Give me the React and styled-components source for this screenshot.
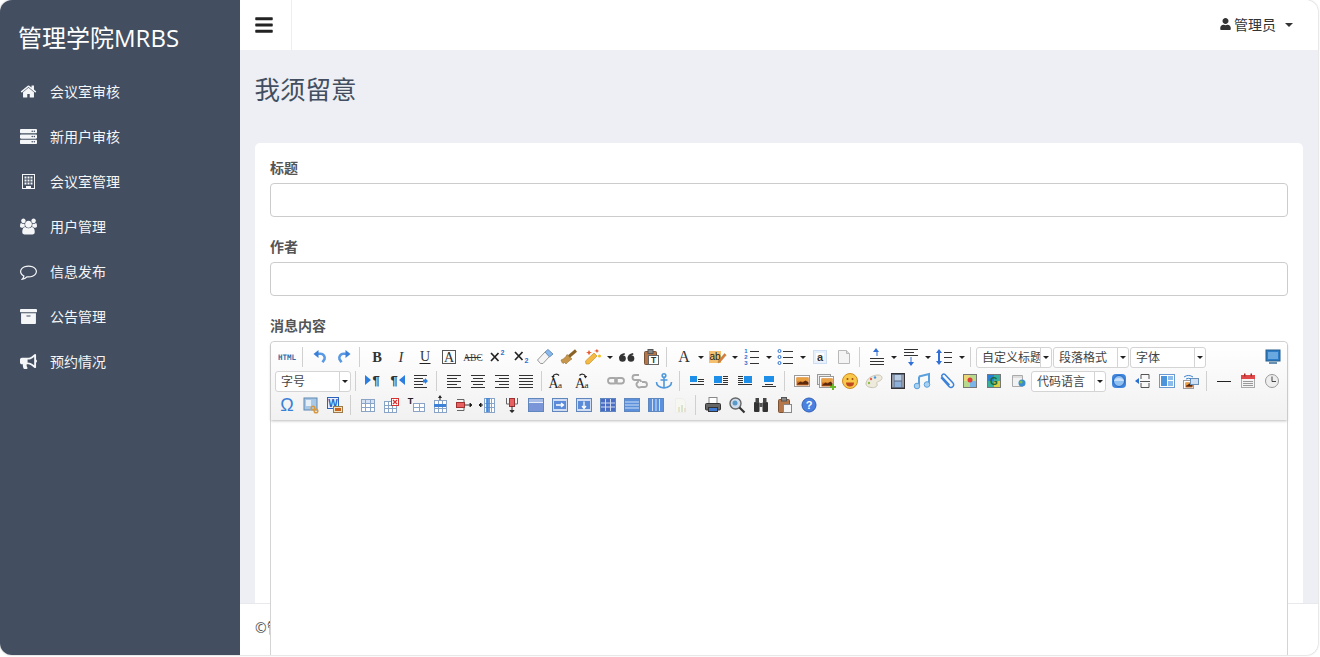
import React from 'react';
import styled, { createGlobalStyle } from 'styled-components';
import { FaServer, FaArchive, FaBullhorn, FaBars, FaUser } from 'react-icons/fa';

const Global = createGlobalStyle`
  html, body { margin: 0; padding: 0; background: #fff; height: 100%; overflow: hidden; }
  * { box-sizing: border-box; }
  body { font-family: "Open Sans", "Noto Sans CJK SC", sans-serif; font-size: 14px; color: #333; }
`;
const Win = styled.div`
  width: 1318px; height: 655px; display: flex; overflow: hidden; position: relative;
  border-radius: 12px; background: #edeff4; box-shadow: 0 0 2px rgba(0,0,0,.35);
`;
const Side = styled.aside`width: 240px; flex: none; background: #434f61; color: #fff;`;
const Brand = styled.div`font-size: 24px; line-height: 34px; padding: 21px 0 13px 18px;`;
const Menu = styled.nav`display: flex; flex-direction: column;`;
const MenuItem = styled.a`
  height: 45px; display: flex; align-items: center; padding-left: 20px; font-size: 14px; color: #f5f6f8;
  svg { width: 17px; height: 17px; margin: 2px 13px 0 0; flex: none; fill: currentColor; }
`;
const Main = styled.main`flex: 1; min-width: 0; display: flex; flex-direction: column; position: relative;`;
const Header = styled.header`height: 50px; flex: none; background: #fff; display: flex; align-items: stretch; justify-content: space-between;`;
const Toggle = styled.button`
  width: 52px; border: 0; border-right: 1px solid #eee; background: #fff; color: #222; padding: 0 0 0 15px; display: flex; align-items: center;
  svg { width: 18px; height: 20px; }
`;
const UserMenu = styled.div`
  display: flex; align-items: center; padding: 0 25px 2px 0; color: #333; font-size: 14px;
  svg { width: 11px; height: 12px; margin-right: 3px; }
`;
const Caret = styled.span`
  margin: 2px 0 0 9px; width: 0; height: 0; border-left: 4px solid transparent; border-right: 4px solid transparent; border-top: 4px solid #333;
`;
const Content = styled.section`padding: 24px 15px 0; flex: 1; min-height: 0;`;
const Title = styled.h1`font-weight: 400; font-size: 25.5px; line-height: 30px; margin: 0 0 39px -.5px; color: #434f61;`;
const Card = styled.div`background: #fff; border-radius: 5px 5px 0 0; padding: 15px 15px 0; height: 700px;`;
const Field = styled.div`margin-bottom: 20px;`;
const Label = styled.label`display: block; font-weight: 700; font-size: 14px; line-height: 20px; margin-bottom: 5px; color: #555;`;
const TextInput = styled.input`display: block; width: 100%; height: 34px; border: 1px solid #ccc; border-radius: 4px; background: #fff;`;
const Footer = styled.footer`
  position: absolute; left: 0; right: 0; bottom: 0; height: 52px; background: #fff; border-top: 1px solid #e7e9ec; z-index: 1;
  padding: 14px 15px; font-size: 14px; line-height: 20px; color: #555;
`;
const Editor = styled.div`position: relative; z-index: 2; background: #fff; border: 1px solid #d4d4d4; border-radius: 4px 4px 0 0; height: 400px;`;
const Toolbar = styled.div`
  height: 78px; padding: 3px 0 0 4px; background: linear-gradient(to bottom, #ffffff, #f1f1f1);
  box-shadow: 0 1px 3px #bbb; border-radius: 4px 4px 0 0; display: flex; flex-direction: column;
`;
const ToolRow = styled.div`display: flex; height: 24px; align-items: center;`;
const ToolBtn = styled.span`
  width: ${p => p.$w}px; height: 24px; flex: none; display: flex; align-items: center; justify-content: ${p => p.$split ? 'flex-start' : 'center'};
  padding-left: ${p => p.$split ? 2 : 0}px; margin-left: ${p => p.$right ? 'auto' : 0}; margin-right: ${p => p.$right ? '2px' : 0};
  svg { display: block; flex: none; }
`;
const ToolCaret = styled.i`
  margin-left: 4px; width: 0; height: 0; border-left: 3px solid transparent; border-right: 3px solid transparent; border-top: 3px solid #222;
`;
const ToolSep = styled.span`
  width: 9px; height: 20px; flex: none;
  &::after { content: ""; display: block; width: 1px; height: 20px; margin-left: 3px; background: #d0d0d0; }
`;
const Combo = styled.span`
  width: ${p => p.$w}px; height: 21px; flex: none; margin: 0 1px 0 ${p => p.$ml || 0}px; display: flex; background: #fff; border: 1px solid #d4d4d4; border-radius: 3px;
  font-size: 12px; line-height: 17px; color: #444; font-family: "Noto Sans CJK SC", sans-serif;
`;
const ComboText = styled.span`flex: 1; min-width: 0; padding-left: 5px; overflow: hidden; white-space: nowrap;`;
const ComboArrow = styled.span`
  width: 11px; flex: none; border-left: 1px solid #d4d4d4; display: flex; align-items: center; justify-content: center;
  &::after { content: ""; border-left: 3px solid transparent; border-right: 3px solid transparent; border-top: 3px solid #222; }
`;
const FootText = styled.span``;

const FaSvg = ({ vw = 1792, d }) => <svg viewBox={`0 0 ${vw} 1792`}><path d={d} /></svg>;
const HomeIc = () => <FaSvg d="M1472 992v480q0 26-19 45t-45 19h-384v-384h-256v384h-384q-26 0-45-19t-19-45v-480q0-1 .5-3t.5-3l575-474 575 474q1 2 1 6zm223-69l-62 74q-8 9-21 11h-3q-13 0-21-7l-692-577-692 577q-12 8-24 7-13-2-21-11l-62-74q-8-10-7-23.5t11-21.5l719-599q32-26 76-26t76 26l244 204v-195q0-14 9-23t23-9h192q14 0 23 9t9 23v408l219 182q10 8 11 21.5t-7 23.5z" />;
const UsersIc = () => <FaSvg vw={1920} d="M593 896q-162 5-265 128h-134q-82 0-138-40.500t-56-118.500q0-353 124-353 6 0 43.500 21t97.500 42.500 119 21.500q67 0 133-23-5 37-5 66 0 139 81 256zm1071 637q0 120-73 189.500t-194 69.500h-874q-121 0-194-69.500t-73-189.500q0-53 3.500-103.500t14-109 26.500-108.500 43-97.500 62-81 85.500-53.500 111.500-20q10 0 43 21.500t73 48 107 48 135 21.500 135-21.500 107-48 73-48 43-21.500q61 0 111.500 20t85.500 53.500 62 81 43 97.500 26.500 108.500 14 109 3.500 103.500zm-1024-1277q0 106-75 181t-181 75-181-75-75-181 75-181 181-75 181 75 75 181zm704 384q0 159-112.500 271.500t-271.500 112.500-271.500-112.500-112.500-271.500 112.500-271.500 271.500-112.500 271.500 112.500 112.500 271.500zm576 225q0 78-56 118.500t-138 40.500h-134q-103-123-265-128 81-117 81-256 0-29-5-66 66 23 133 23 59 0 119-21.500t97.500-42.500 43.500-21q124 0 124 353zm-128-609q0 106-75 181t-181 75-181-75-75-181 75-181 181-75 181 75 75 181z" />;
const CommentIc = () => <FaSvg d="M896 384q-204 0-381.500 69.500t-282 187.500-104.500 255q0 112 71.500 213.500t201.500 175.500l87 50-27 96q-24 91-70 172 152-63 275-171l43-38 57 6q69 8 130 8 204 0 381.500-69.500t282-187.500 104.500-255-104.500-255-282-187.500-381.500-69.500zm896 512q0 174-120 321.500t-326 233-450 85.500q-70 0-145-8-198 175-460 242-49 14-114 22h-5q-15 0-27-10.500t-16-27.500v-1q-3-4-.5-12t2-10 4.500-9.500l6-9 7-8.500 8-9q7-8 31-34.500t34.500-38 31-39.500 32.500-51 27-59 26-76q-157-89-247.500-220t-90.500-281q0-174 120-321.500t326-233 450-85.500 450 85.500 326 233 120 321.500z" />;
const BuildingIc = () => (
  <svg viewBox="0 0 17 17">
    <path d="M2 1h13v15H2zM3 2v13h3v-2h5v2h3V2z" fillRule="evenodd" />
    {[3.500, 6.500, 9.500].map(y => [4.500, 7.500, 10.500].map(x => <rect key={`${x}${y}`} x={x} y={y} width="2" height="2" />))}
  </svg>
);

const Svg = ({ w = 20, children }) => <svg width={w} height="20" viewBox={`0 0 ${w} 20`}>{children}</svg>;
const serif = '"Liberation Serif", serif';
const sans = '"Liberation Sans", sans-serif';
const T = ({ x = 10, y = 15, s = 14, f = serif, c = '#333', b, i, children, ...r }) => (
  <text x={x} y={y} textAnchor="middle" fontSize={s} fontFamily={f} fill={c} fontWeight={b ? 700 : 400} fontStyle={i ? 'italic' : 'normal'} {...r}>{children}</text>
);
const Ln = ({ rows, c = '#333' }) => rows.map((r, k) => <rect key={k} x={r[0]} y={r[1]} width={r[2]} height={1} fill={c} />);
const para = (xs, y0 = 4, n = 5, step = 3) => Array.from({ length: n }, (_, k) => { const v = xs[k % xs.length]; return [v[0], y0 + k * step, v[1]]; });
const Photo = ({ x, y, w, h }) => (
  <g>
    <rect x={x} y={y} width={w} height={h} fill="#fff" stroke="#9a9a9a" />
    <rect x={x + 2} y={y + 2} width={w - 3} height={h - 3} fill="#c9661c" />
    <rect x={x + 2} y={y + 2} width={w - 3} height={(h - 3) / 2} fill="#e8a040" />
    <path d={`M${x + 2} ${y + h - 2}l4-3 2 1 3-2 ${w - 12} 2v2z`} fill="#5a2a10" />
  </g>
);
const Tbl = ({ x = 3, y = 5, w = 14, h = 12, head, fill = '#fff', c = '#8aa4c8', cols = 3, rows = 3 }) => (
  <g>
    <rect x={x + .5} y={y + .5} width={w} height={h} fill={fill} stroke={c} />
    {head && <rect x={x + 1} y={y + 1} width={w - 1} height={3} fill={head} />}
    {Array.from({ length: cols - 1 }, (_, k) => <rect key={k} x={x + Math.round((k + 1) * w / cols)} y={y} width="1" height={h} fill={c} />)}
    {Array.from({ length: rows - 1 }, (_, k) => <rect key={k} x={x} y={y + Math.round((k + 1) * h / rows)} width={w} height="1" fill={c} />)}
  </g>
);
const Cell = ({ x, y, w, h, c = '#4a6cc4' }) => <rect x={x} y={y} width={w} height={h} fill={c} />;
const Frame = ({ children }) => (<g><rect x="2.500" y="3.500" width="15" height="13" fill="#cfdcf2" stroke="#5f86bd" />{children}</g>);
const imgAlign = (bx, by, bw, bh, lines) => (<g><rect x={bx} y={by} width={bw} height={bh} fill="#1e8fe8" /><Ln rows={lines} /></g>);
const Cross = ({ y }) => <path d={`M4 ${y}l7.500 8M11.500 ${y}L4 ${y + 8}`} stroke="#222" strokeWidth="1.700" fill="none" />;
const Quote = ({ x }) => <g fill="#333"><circle cx={x + 3.500} cy="11.500" r="3.300" /><path d={`M${x} 11.500C${x} 8.500 ${x + 2} 6.500 ${x + 5.500} 6l.5 1.500C${x + 4} 8 ${x + 3} 9 ${x + 3} 11z`} /></g>;

const icons = {
  html: <Svg><text x="10" y="13" textAnchor="middle" fontSize="7.500" fontWeight="700" fontFamily='"DejaVu Sans Mono", monospace' fill="#2f6ea8">HTML</text></Svg>,
  undo: <Svg><path d="M8 6.800h2.500a4.200 4.200 0 0 1 4 5.500l-2 3" fill="none" stroke="#5a9ae4" strokeWidth="2.600" /><path d="M3.500 7L8.500 3v8z" fill="#3a80d8" /></Svg>,
  redo: <Svg><path d="M12 6.800H9.500a4.200 4.200 0 0 0-4 5.500l2 3" fill="none" stroke="#5a9ae4" strokeWidth="2.600" /><path d="M16.500 7L11.500 3v8z" fill="#3a80d8" /></Svg>,
  bold: <Svg><T b s={14.500}>B</T></Svg>,
  italic: <Svg><T i s={14.500}>I</T></Svg>,
  underline: <Svg><T s={14} y={14}>U</T><rect x="4.500" y="16" width="11" height="1" fill="#222" /></Svg>,
  fontborder: <Svg><rect x="3.500" y="3.500" width="13" height="13" fill="none" stroke="#555" /><T s={14} y={15}>A</T></Svg>,
  strike: <Svg><T s={9.500} y={14} c="#444">ABC</T><rect x="2" y="10" width="16" height="1" fill="#333" /></Svg>,
  sup: <Svg><Cross y={6} /><T s={7} x={15.500} y={8} f={sans} c="#2b6fd0" b>2</T></Svg>,
  sub: <Svg><Cross y={5} /><T s={7} x={15.500} y={16} f={sans} c="#2b6fd0" b>2</T></Svg>,
  eraser: <Svg><path d="M2.500 13L10 5l4.500 4.500L8 16.500H5.500z" fill="#f4f4f4" stroke="#999" /><path d="M10 5l3-2.500 5 4.500-3.500 3z" fill="#88b8ec" stroke="#6a93c0" /></Svg>,
  brush: <Svg><path d="M2 13C5 12 7 10 8 7.500l5 4.500c-2 1-4 3-6 5L5.500 15.500 4 16.500 3 15.500z" fill="#c8964a" stroke="#8a6226" strokeWidth=".5" /><path d="M10 9.500l7-6" stroke="#8a6226" strokeWidth="3" /></Svg>,
  wand: <Svg><path d="M3 17l-.500-3L11 6l3 3-8 8z" fill="#f5b946" stroke="#c08a20" strokeWidth=".6" /><path d="M5 5l1-2 1 2 2 .500-2 .800-1 2-1-2-2-.800zM14 2l.800 1.500 1.500.500-1.500.600-.800 1.500-.800-1.500L11 4l1.700-.500z" fill="#e8562c" /><circle cx="16.500" cy="9" r="1.500" fill="#f4c020" /></Svg>,
  quote: <Svg><Quote x={2} /><Quote x={10.500} /></Svg>,
  paste: <Svg><rect x="3.500" y="4.500" width="12" height="13" rx="1" fill="#b5764a" stroke="#7a5236" /><rect x="7" y="2.500" width="5" height="4" fill="#888" stroke="#555" /><rect x="7.500" y="8.500" width="10" height="9" fill="#fff" stroke="#666" /><T x={12.500} y={16} s={8.500} f={sans} b c="#333">T</T></Svg>,
  color: <Svg><T s={16} y={15}>A</T></Svg>,
  highlight: <Svg><rect x="1" y="4" width="12" height="12" fill="#f4c070" /><T x={7} y={13} s={10} f={sans} c="#222">ab</T><path d="M10 16l.500-2.500 6-7 1.800 1.500-6 7z" fill="#e07838" stroke="#884" strokeWidth=".4" /></Svg>,
  ol: <Svg><T x={4} y={6} s={6} f={sans} c="#2b6fd0" b>1</T><T x={4} y={12} s={6} f={sans} c="#2b6fd0" b>2</T><T x={4} y={18} s={6} f={sans} c="#2b6fd0" b>3</T><Ln rows={[[8, 4, 9], [8, 10, 9], [8, 16, 9]]} /></Svg>,
  ul: <Svg>{[4, 10, 16].map(y => <circle key={y} cx="3.500" cy={y} r="1.500" fill="none" stroke="#2b6fd0" />)}<Ln rows={[[7, 4, 10], [7, 10, 10], [7, 16, 10]]} /></Svg>,
  selectall: <Svg><rect x="3.500" y="3.500" width="13" height="13" fill="#e8f0fc" stroke="#a8c4ec" strokeDasharray="1 1" /><rect x="6" y="6" width="8" height="8" fill="#fff" /><T s={11} y={14} f={sans} c="#333" b>a</T></Svg>,
  page: <Svg><path d="M4.500 3.500h8l3 3v10h-11z" fill="#f4f4f4" stroke="#b8b8b8" /><path d="M12.500 3.500v3h3" fill="#ddd" stroke="#b8b8b8" /></Svg>,
  rowtop: <Svg><path d="M9 1L12 5H10.500V9H9.500V5H6z" fill="#2f6fd6" /><Ln rows={[[3, 11, 14], [3, 14, 14], [3, 17, 14]]} /></Svg>,
  rowbot: <Svg><Ln rows={[[3, 2, 14], [3, 5, 10], [3, 8, 14]]} /><path d="M9.500 10h1v5H13l-3 4-3-4h2.500z" fill="#2f6fd6" /></Svg>,
  lineheight: <Svg><path d="M4 2l3 4H5v8h2l-3 4-3-4h2V6H1z" fill="#2f6fd6" /><Ln rows={[[9, 5, 8], [9, 10, 8], [9, 15, 8]]} /></Svg>,
  full: <Svg><rect x="3" y="3" width="14" height="11" fill="#2d7dc8" stroke="#245e8c" /><rect x="5" y="5" width="10" height="7" fill="#6aa8e0" /><rect x="6" y="15" width="8" height="2" fill="#6a8fb0" /></Svg>,
  ltr: <Svg><path d="M2 4l6 5-6 5z" fill="#2b7de0" /><T x={13} y={14} s={13} f={sans} c="#333" b>¶</T></Svg>,
  rtl: <Svg><T x={7} y={14} s={13} f={sans} c="#333" b>¶</T><path d="M18 4l-6 5 6 5z" fill="#2b7de0" /></Svg>,
  indent: <Svg><Ln rows={[[3, 4, 13], [3, 7, 9], [3, 10, 9], [3, 13, 9], [3, 16, 13]]} /><path d="M12 8.500h2V7l3 3-3 3v-1.500h-2z" fill="#2b7de0" /></Svg>,
  aleft: <Svg><Ln rows={para([[3, 14], [3, 10]], 4, 5)} /></Svg>,
  acenter: <Svg><Ln rows={para([[3, 14], [5, 10]], 4, 5)} /></Svg>,
  aright: <Svg><Ln rows={para([[3, 14], [7, 10]], 4, 5)} /></Svg>,
  ajust: <Svg><Ln rows={para([[3, 14]], 4, 5)} /></Svg>,
  upper: <Svg w={29}><T x={6.500} y={17} s={14} c="#222">A</T><T x={13} y={17} s={9} c="#222">a</T><path d="M6 5.500a3.500 3.500 0 0 1 6-1" fill="none" stroke="#222" strokeWidth="1.200" /><path d="M4.300 5h3.400L6 7.500z" fill="#222" /></Svg>,
  lower: <Svg w={29}><T x={5} y={17} s={14} c="#222">A</T><T x={11.500} y={17} s={9} c="#222">a</T><path d="M4.500 4.500A3.500 3.500 0 0 1 10.500 5.500" fill="none" stroke="#222" strokeWidth="1.200" /><path d="M8.800 5h3.400L10.500 7.500z" fill="#222" /></Svg>,
  link: <Svg><g fill="none" stroke="#a8a8a8" strokeWidth="1.800"><rect x="2" y="7" width="9" height="5.500" rx="2.700" /><rect x="9" y="7" width="9" height="5.500" rx="2.700" /></g></Svg>,
  unlink: <Svg><g fill="none" stroke="#a8a8a8" strokeWidth="1.800"><path d="M9 4H5a2.500 2.500 0 0 0 0 5h4a2 2 0 0 1 2 2" /><path d="M9 9a2 2 0 0 0 -1 2a2.500 2.500 0 0 0 3 5h3.500a2.500 2.500 0 0 0 0-5H12" /></g></Svg>,
  anchor: <Svg><g fill="none" stroke="#4f98dc" strokeWidth="1.600"><circle cx="10" cy="4.500" r="1.800" /><path d="M10 6.500V17M6.500 9h7M2.500 11c0 3.500 3.500 5.500 7.500 6 4-.5 7.500-2.500 7.500-6" /></g></Svg>,
  inone: <Svg>{imgAlign(3, 5, 7, 6, [[11, 8, 6], [11, 10, 6], [3, 13, 14]])}</Svg>,
  ileft: <Svg>{imgAlign(3, 5, 8, 7, [[12, 5, 5], [12, 7, 5], [12, 9, 5], [12, 11, 5], [3, 13, 14]])}</Svg>,
  iright: <Svg>{imgAlign(9, 5, 8, 7, [[3, 5, 5], [3, 7, 5], [3, 9, 5], [3, 11, 5], [3, 13, 14]])}</Svg>,
  icenter: <Svg>{imgAlign(5, 5, 10, 6, [[6, 13, 8], [3, 15, 14]])}</Svg>,
  image: <Svg><Photo x={2.500} y={4.500} w={15} h={11} /></Svg>,
  images: <Svg><rect x="1.500" y="3.500" width="13" height="10" fill="#eee" stroke="#999" /><Photo x={3.500} y={5.500} w={14} h={11} /><path d="M14 15h2v-2h2v2h2v2h-2v2h-2v-2h-2z" fill="#6cb82c" /></Svg>,
  emoji: <Svg><circle cx="10" cy="10" r="7.500" fill="#f8c84a" stroke="#d08a20" /><circle cx="7.500" cy="8" r="1" fill="#a04a10" /><circle cx="12.500" cy="8" r="1" fill="#a04a10" /><path d="M6 11.500h8a4 4 0 0 1-8 0z" fill="#c04a20" /></Svg>,
  palette: <Svg><path d="M2 13c0-5 6-9 12-9 4 0 5 3 3 5s-5 1-4 4-3 4-6 3.500S2 15 2 13z" fill="#eeeadc" stroke="#c8c4b4" /><circle cx="7" cy="8" r="1.200" fill="#e8604a" /><circle cx="11" cy="6.500" r="1.200" fill="#4a98e0" /><circle cx="5" cy="12" r="1.200" fill="#8cc04a" /></Svg>,
  video: <Svg><rect x="3.500" y="2.500" width="13" height="15" fill="#5a6880" stroke="#333" /><rect x="6.500" y="4" width="7" height="5.500" fill="#b8cce4" /><rect x="6.500" y="10.500" width="7" height="5.500" fill="#8cb0d8" /><rect x="4.500" y="4" width="1" height="12" fill="#ccc" /><rect x="14.500" y="4" width="1" height="12" fill="#ccc" /></Svg>,
  music: <Svg><path d="M7 5.500l10-2.500v10.500" fill="none" stroke="#5aa0dc" strokeWidth="2" /><path d="M7 5.500V15" stroke="#5aa0dc" strokeWidth="2" /><circle cx="5" cy="15" r="2.800" fill="#a8d0f0" stroke="#5aa0dc" /><circle cx="15" cy="13.500" r="2.800" fill="#a8d0f0" stroke="#5aa0dc" /></Svg>,
  attach: <Svg><path d="M5 6.500l8 9a2.600 2.600 0 0 0 4-3.500L9 3.500a2 2 0 0 0-3 2.500l7.500 8" fill="none" stroke="#3b82d8" strokeWidth="1.500" /></Svg>,
  map: <Svg><rect x="3.500" y="3.500" width="13" height="13" fill="#b8d88a" stroke="#777" /><rect x="4" y="4" width="6" height="6" fill="#e8d878" /><rect x="10" y="10" width="6" height="6" fill="#7ab4e8" /><circle cx="10" cy="9" r="2.500" fill="#e03c3c" /></Svg>,
  gmap: <Svg><rect x="3.500" y="3.500" width="13" height="13" fill="#38b0a0" stroke="#777" /><rect x="4" y="4" width="6" height="6" fill="#2a80d8" /><rect x="10" y="10" width="6" height="6" fill="#d8d040" /><T x={10} y={14} s={10} b f={sans} c="#1a6a3a">G</T></Svg>,
  iframe: <Svg><path d="M4.500 4.500h10v11h-10z" fill="#f2f2f2" stroke="#aaa" /><rect x="5" y="5" width="9" height="2" fill="#ddd" /><circle cx="14" cy="12" r="3.500" fill="#3a8ed0" /><circle cx="13" cy="11" r="1.500" fill="#7ac040" /></Svg>,
  app: <Svg><rect x="3" y="3" width="14" height="14" rx="4" fill="#3f86e0" /><circle cx="10" cy="10" r="5.500" fill="#8ec0f2" stroke="#2a66b8" /><path d="M5 10a5 3 0 0 1 10 0z" fill="#c8e0f8" /></Svg>,
  pagebreak: <Svg><path d="M8 8V3.500h8V8M8 12v4.500h8V12" fill="none" stroke="#555" /><Ln rows={[[7, 10, 10]]} c="#555" /><path d="M2 10l4-3v6z" fill="#2b6fd0" /></Svg>,
  template: <Svg><rect x="2.500" y="3.500" width="15" height="13" fill="#fff" stroke="#6a9ad0" /><rect x="4" y="5" width="6" height="10" fill="#4c94dc" /><rect x="11" y="5" width="5" height="4" fill="#8cbcec" /><rect x="11" y="10" width="5" height="5" fill="#8cbcec" /></Svg>,
  bg: <Svg><Photo x={2.500} y={9.500} w={10} h={8} /><rect x="9.500" y="7.500" width="8" height="6" fill="#cfe0f4" stroke="#6a8fb8" /><path d="M3 6a8 8 0 0 1 9 0M5 8a5 5 0 0 1 5 0" fill="none" stroke="#3a82d0" /></Svg>,
  hr: <Svg><rect x="3" y="10" width="14" height="1" fill="#222" /></Svg>,
  date: <Svg><rect x="3.500" y="4.500" width="13" height="12" fill="#f4f4f4" stroke="#aaa" /><rect x="3" y="4" width="14" height="4" fill="#e0484a" /><rect x="6" y="2.500" width="1.500" height="3" fill="#a03030" /><rect x="12.500" y="2.500" width="1.500" height="3" fill="#a03030" /><Ln rows={[[5, 10, 10], [5, 12, 10], [5, 14, 10]]} c="#999" /></Svg>,
  time: <Svg><circle cx="10" cy="10" r="6.500" fill="#eee" stroke="#999" /><path d="M10 5.500V10.500H14" fill="none" stroke="#444" /></Svg>,
  omega: <Svg><T s={18} y={16} f={sans} c="#3a7fd8">Ω</T></Svg>,
  scrawl: <Svg><rect x="3" y="3" width="13" height="12" fill="#a8c8e8" stroke="#5f88b0" /><rect x="5" y="5" width="5" height="6" fill="#e4eff8" /><g fill="none" stroke="#d89a40" strokeWidth="1.500"><circle cx="12" cy="13" r="1.800" /><circle cx="15" cy="16" r="1.800" /></g></Svg>,
  word: <Svg><rect x="2.500" y="2.500" width="11" height="11" fill="#e8f0fb" stroke="#2a62c0" /><T x={8} y={12} s={10} b f={sans} c="#2a62c0">W</T><rect x="8.500" y="11.500" width="9" height="6" fill="#f2e2c0" stroke="#9a7a4a" /><rect x="10" y="13" width="6" height="3" fill="#c8641e" /></Svg>,
  tbl: <Svg><Tbl x={3} y={4} w={13} h={12} head="#d4e2f4" /></Svg>,
  tbldel: <Svg><Tbl x={2} y={6} w={12} h={11} /><rect x="9.500" y="3.500" width="7" height="7" fill="#fff" stroke="#d83030" /><path d="M11 5l4 4M15 5l-4 4" stroke="#d83030" strokeWidth="1.300" /></Svg>,
  caption: <Svg><Tbl x={7} y={8} w={11} h={8} cols={2} rows={2} /><T x={4.500} y={9} s={9} b f={sans} c="#222">T</T></Svg>,
  rowins: <Svg><Tbl x={4} y={5} w={12} h={12} /><rect x="4" y="9" width="12" height="3" fill="#3b82d8" /><path d="M10 0l2 3h-1.500v2h-1V3H8z" fill="#222" /></Svg>,
  rowdel: <Svg><rect x="2.500" y="7.500" width="8" height="5" fill="#e86060" stroke="#a03030" /><path d="M3 4.500h7V7.500M3 15.500h7V12.500" fill="none" stroke="#666" /><path d="M11 10h5M16 8l2 2-2 2z" stroke="#333" /></Svg>,
  colins: <Svg><Tbl x={6} y={3} w={10} h={14} cols={3} rows={3} /><rect x="8" y="3" width="4" height="14" fill="#3b82d8" opacity=".8" /><path d="M1 10h4M3 8L1 10l2 2z" stroke="#222" /></Svg>,
  coldel: <Svg><rect x="7.500" y="3.500" width="5" height="8" fill="#e86060" stroke="#a03030" /><path d="M4.500 3v6h3M15.500 3v6h-3" fill="none" stroke="#666" /><path d="M10 11v5M8 15.500l2 2 2-2z" stroke="#333" /></Svg>,
  merge: <Svg><Frame><rect x="3" y="4" width="14" height="3" fill="#a8bce8" /><rect x="3" y="7" width="14" height="1" fill="#e8eefa" /><rect x="3" y="8" width="14" height="8" fill="#7a96d8" /></Frame></Svg>,
  mergeR: <Svg><Frame><rect x="4" y="6" width="12" height="8" fill="#5a8ad8" /><path d="M6 10h7M11 8l2.500 2-2.500 2" fill="none" stroke="#fff" strokeWidth="1.300" /></Frame></Svg>,
  mergeD: <Svg><Frame><rect x="4" y="6" width="12" height="8" fill="#5a8ad8" /><path d="M10 6.500V13M8 11l2 2.500 2-2.500" fill="none" stroke="#fff" strokeWidth="1.300" /></Frame></Svg>,
  split: <Svg><Frame><Cell x={3} y={4} w={14} h={12} /><path d="M3 8h14M3 12h14M7.500 4v12M12.500 4v12" stroke="#cfdcf2" /></Frame></Svg>,
  splitR: <Svg><Frame><Cell x={3} y={4} w={14} h={12} c="#5a90dc" /><path d="M3 7h14M3 10h14M3 13h14" stroke="#cfe0f4" /></Frame></Svg>,
  splitC: <Svg><Frame><Cell x={3} y={4} w={14} h={12} c="#5a90dc" /><path d="M6.500 4v12M10 4v12M13.500 4v12" stroke="#cfe0f4" /></Frame></Svg>,
  chart: <Svg><path d="M5.500 3.500h7l3 3v11h-10z" fill="#f7f7f2" stroke="#eee" /><rect x="8" y="12" width="2" height="5" fill="#e4e4c8" /><rect x="11" y="10" width="2" height="7" fill="#d8e4d0" /><rect x="14" y="13" width="2" height="4" fill="#e8e0d0" /></Svg>,
  print: <Svg><rect x="6" y="2.500" width="8" height="6" fill="#fff" stroke="#888" /><rect x="2.500" y="8.500" width="15" height="6.500" rx="1" fill="#666" stroke="#333" /><rect x="5.500" y="12.500" width="9" height="4" fill="#3f78d0" stroke="#333" /></Svg>,
  preview: <Svg><circle cx="8.500" cy="8.500" r="5.500" fill="#cfdcec" stroke="#666" strokeWidth="1.400" /><circle cx="8" cy="8" r="2.500" fill="#5a9ac8" /><path d="M12.500 12.500l5 5" stroke="#333" strokeWidth="2.200" /></Svg>,
  binoc: <Svg><rect x="3" y="7" width="5.500" height="10" rx="1" fill="#333" /><rect x="11.500" y="7" width="5.500" height="10" rx="1" fill="#333" /><rect x="4.500" y="3" width="3.500" height="5" fill="#444" /><rect x="12" y="3" width="3.500" height="5" fill="#444" /><rect x="8.500" y="8" width="3" height="4" fill="#555" /></Svg>,
  pastedoc: <Svg><rect x="3.500" y="4.500" width="11" height="13" rx="1" fill="#b5764a" stroke="#7a5236" /><rect x="6.500" y="2.500" width="5" height="3.500" fill="#888" stroke="#555" /><rect x="8.500" y="9.500" width="8" height="8" fill="#f6f6f6" stroke="#888" /></Svg>,
  help: <Svg><circle cx="10" cy="10" r="7" fill="#4a80e0" stroke="#3060b8" /><T s={11} y={14} b f={sans} c="#fff">?</T></Svg>,
};

const rows = [
  ['html', '|', 'undo', 'redo', '|', 'bold', 'italic', 'underline', 'fontborder', 'strike', 'sup', 'sub', 'eraser', 'brush', 'wand*', 'quote', 'paste', '|', 'color*', 'highlight*', 'ol*', 'ul*', 'selectall', 'page', '|', 'rowtop*', 'rowbot*', 'lineheight*', '|', '#自定义标题', '#段落格式', '#字体', '>full'],
  ['#字号', '|', 'ltr', 'rtl', 'indent', '|', 'aleft', 'acenter', 'aright', 'ajust', '|', '~upper', '~lower', 'link', 'unlink', 'anchor', '|', 'inone', 'ileft', 'iright', 'icenter', '|', 'image', 'images', 'emoji', 'palette', 'video', 'music', 'attach', 'map', 'gmap', 'iframe', '#代码语言', 'app', 'pagebreak', 'template', 'bg', '|', 'hr', 'date', 'time'],
  ['omega', 'scrawl', 'word', '|', 'tbl', 'tbldel', 'caption', 'rowins', 'rowdel', 'colins', 'coldel', 'merge', 'mergeR', 'mergeD', 'split', 'splitR', 'splitC', 'chart', '|', 'print', 'preview', 'binoc', 'pastedoc', 'help'],
];

const Tool = ({ t }) => {
  if (t === '|') return <ToolSep />;
  if (t === '#代码语言') return <Combo $w={75} $ml={1}><ComboText>{t.slice(1)}</ComboText><ComboArrow /></Combo>;
  if (t[0] === '#') return <Combo $w={76}><ComboText>{t.slice(1)}</ComboText><ComboArrow /></Combo>;
  if (t[0] === '>') return <ToolBtn $w={24} $right>{icons[t.slice(1)]}</ToolBtn>;
  if (t[0] === '~') return <ToolBtn $w={t === '~upper' ? 28 : 29}>{icons[t.slice(1)]}</ToolBtn>;
  if (t.endsWith('*')) return <ToolBtn $w={34} $split>{icons[t.slice(0, -1)]}<ToolCaret /></ToolBtn>;
  return <ToolBtn $w={24}>{icons[t]}</ToolBtn>;
};

const nav = [
  [HomeIc, '会议室审核'], [FaServer, '新用户审核'], [BuildingIc, '会议室管理'], [UsersIc, '用户管理'],
  [CommentIc, '信息发布'], [FaArchive, '公告管理'], [FaBullhorn, '预约情况'],
];

export default function App() {
  return (
    <>
      <Global />
      <Win>
        <Side>
          <Brand>管理学院MRBS</Brand>
          <Menu>
            {nav.map(([Ic, label]) => <MenuItem key={label}><Ic />{label}</MenuItem>)}
          </Menu>
        </Side>
        <Main>
          <Header>
            <Toggle><FaBars /></Toggle>
            <UserMenu><FaUser />管理员<Caret /></UserMenu>
          </Header>
          <Content>
            <Title>我须留意</Title>
            <Card>
              <Field><Label>标题</Label><TextInput /></Field>
              <Field><Label>作者</Label><TextInput /></Field>
              <Label>消息内容</Label>
              <Editor>
                <Toolbar>
                  {rows.map((r, k) => <ToolRow key={k}>{r.map((t, j) => <Tool key={j} t={t} />)}</ToolRow>)}
                </Toolbar>
              </Editor>
            </Card>
          </Content>
          <Footer><FootText>©管理学院</FootText></Footer>
        </Main>
      </Win>
    </>
  );
}
